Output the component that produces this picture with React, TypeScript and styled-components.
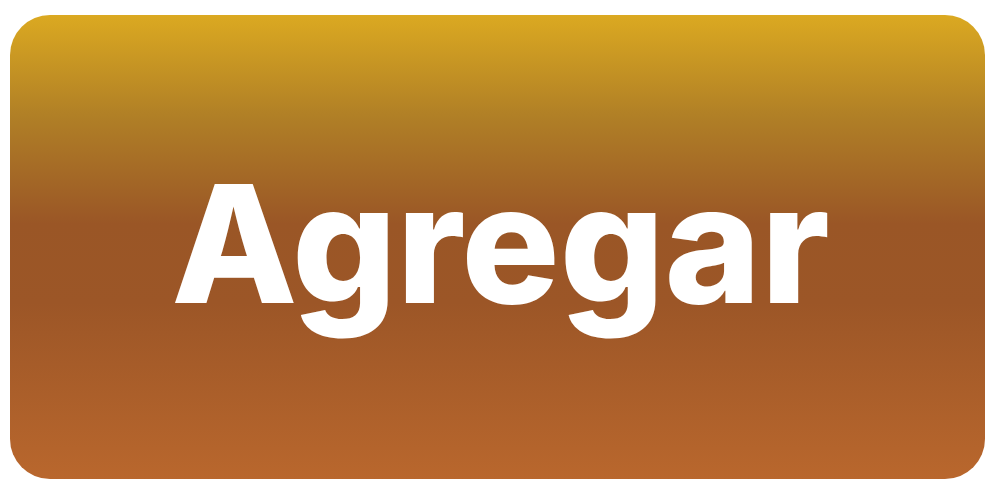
import React from "react";
import styled, { createGlobalStyle } from "styled-components";

const Global = createGlobalStyle`
  html, body { margin: 0; padding: 0; background: #ffffff; }
  #root { width: 1000px; height: 500px; }
`;

const Page = styled.div`
  box-sizing: border-box;
  width: 1000px;
  height: 500px;
  padding: 15px 15px 21px 10px;
  display: flex;
`;

const Button = styled.button`
  flex: 1;
  border: none;
  margin: 0;
  border-radius: 40px;
  background: linear-gradient(
    to bottom,
    #dba921 0%,
    #b07f26 22%,
    #9a5626 45%,
    #9c5627 62%,
    #b9672d 100%
  );
  display: flex;
  align-items: center;
  justify-content: center;
  color: #ffffff;
  font-family: "Inter", "Lato", "Liberation Sans", sans-serif;
  font-weight: 800;
  font-size: 164px;
  letter-spacing: 0;
  cursor: pointer;
  padding: 0 0 8px 6px;
`;

export default function App() {
  return (
    <>
      <Global />
      <Page>
        <Button>Agregar</Button>
      </Page>
    </>
  );
}
